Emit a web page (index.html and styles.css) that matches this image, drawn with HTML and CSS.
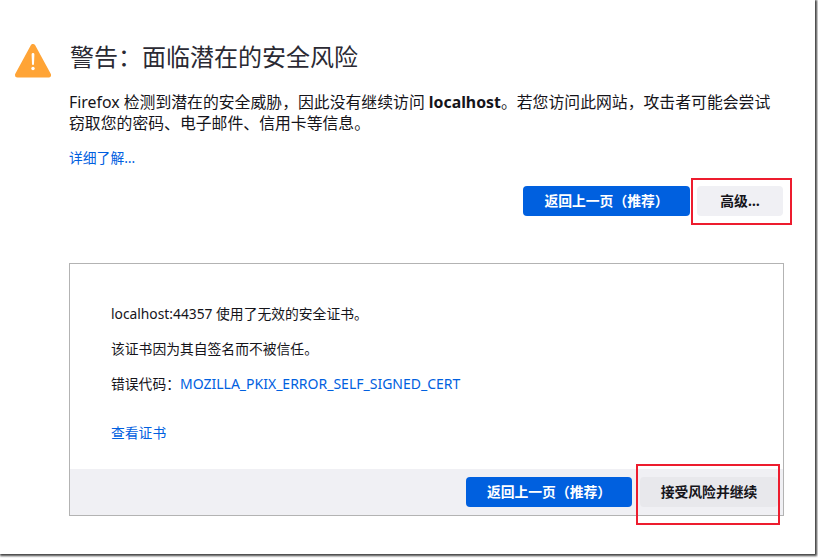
FILE: index.html
```html
<!DOCTYPE html>
<html lang="zh-CN">
<head>
<meta charset="utf-8">
<title>警告：面临潜在的安全风险</title>
<link rel="stylesheet" href="styles.css">
</head>
<body>
<div class="frame">
  <main class="page">
    <header class="head">
      <svg class="warn" viewBox="0 0 36 34" aria-hidden="true">
        <path d="M18 2.5 L33.5 31 L2.5 31 Z" fill="#ffa436" stroke="#ffa436" stroke-width="5" stroke-linejoin="round"/>
        <path d="M16.6 10.5 a1.4 1.4 0 0 1 2.8 0 L19 20 a1 1 0 0 1 -2 0 Z" fill="#fff"/>
        <circle cx="18" cy="24.5" r="1.7" fill="#fff"/>
      </svg>
      <h1 class="title">警告：面临潜在的安全风险</h1>
    </header>
    <div class="content">
      <p class="lead">Firefox 检测到潜在的安全威胁，因此没有继续访问 <b>localhost</b>。若您访问此网站，攻击者可能会尝试窃取您的密码、电子邮件、信用卡等信息。</p>
      <a class="link more" href="#">详细了解…</a>
      <div class="actions top">
        <button class="btn primary">返回上一页（推荐）</button>
        <button class="btn ghost">高级…<span class="mark mark-a"></span></button>
      </div>
      <section class="panel">
        <div class="info">
          <p>localhost:44357 使用了无效的安全证书。</p>
          <p>该证书因为其自签名而不被信任。</p>
          <p>错误代码：<a class="link code" href="#">MOZILLA_PKIX_ERROR_SELF_SIGNED_CERT</a></p>
          <a class="link cert" href="#">查看证书</a>
        </div>
        <div class="actions foot">
          <button class="btn primary narrow">返回上一页（推荐）</button>
          <button class="btn ghost dark">接受风险并继续<span class="mark mark-b"></span></button>
        </div>
      </section>
    </div>
  </main>
</div>
</body>
</html>
```
FILE: styles.css
```css
* { box-sizing: border-box; }
html, body { margin: 0; height: 100%; background: #fff; overflow: hidden; }
body { font-family: "Noto Sans", "Noto Sans CJK SC", sans-serif; color: #15141a; }
.frame { width: 815px; height: 554px; background: #fff; box-shadow: 1px 1px 2px 1px #444; }
.page { padding: 39px 32px 0 15px; }
.head { display: flex; align-items: flex-start; gap: 19px; height: 36px; }
.warn { width: 36px; height: 34px; flex: none; margin-top: 5px; }
.title { margin: 0; font-size: 24px; font-weight: 400; line-height: 36px; color: #2b2a33; }
.content { margin-left: 54px; }
.lead { margin: 17px 0 0; font-size: 15.85px; line-height: 21px; width: 714px; }
.link { color: #0060df; text-decoration: none; }
.more { display: block; margin-top: 14px; font-size: 13.8px; line-height: 20px; }
.actions { display: flex; justify-content: flex-end; gap: 7px; }
.top { margin-top: 18px; }
.btn { position: relative; height: 30px; border: 0; border-radius: 4px; padding: 0; font: 700 13.8px/30px "Noto Sans", "Noto Sans CJK SC", sans-serif; }
.primary { width: 167px; background: #0060df; color: #fff; }
.narrow { width: 166px; }
.ghost { width: 86px; background: #f0f0f4; color: #15141a; }
.dark { width: 138px; background: #e8e8ec; }
.mark { position: absolute; border: 2px solid #ed1c2e; }
.mark-a { left: -6px; top: -8px; width: 101px; height: 47px; }
.mark-b { left: -4px; top: -13px; width: 144px; height: 61px; }
.panel { margin-top: 47px; width: 715px; height: 253px; border: 1px solid #b3b3b3; display: flex; flex-direction: column; justify-content: space-between; }
.info { padding: 40px 41px 0; font-size: 13.8px; line-height: 20px; }
.info p { margin: 0 0 15px; }
.code { font-size: 14px; }
.cert { display: block; margin-top: 29px; }
.foot { height: 46px; background: #f0f0f4; padding: 8px 5px 0 0; gap: 8px; }
```
